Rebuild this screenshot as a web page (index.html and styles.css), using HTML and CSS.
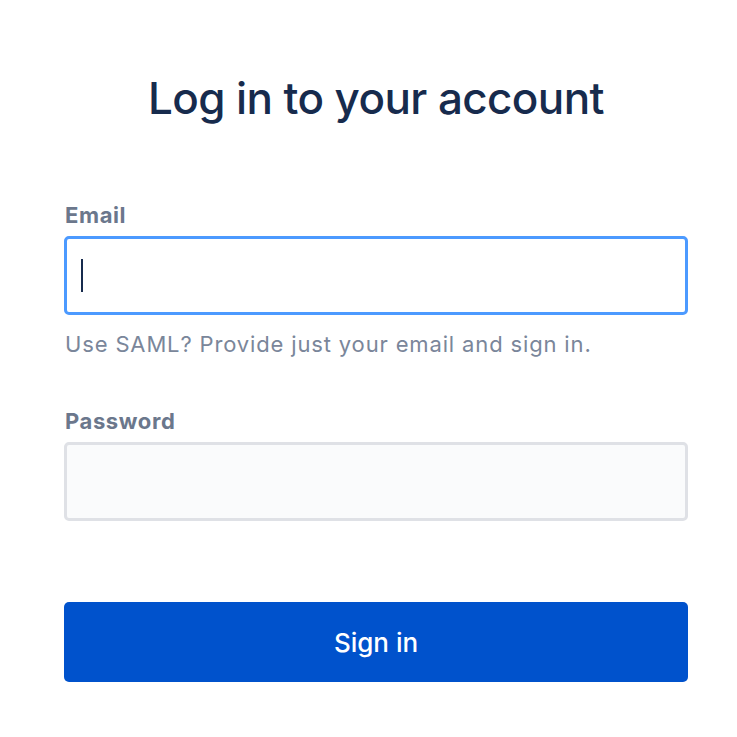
FILE: index.html
```html
<!DOCTYPE html>
<html>
<head>
<meta charset="utf-8">
<link rel="stylesheet" href="styles.css">
</head>
<body>
<main class="page">
  <h1 class="title">Log in to your account</h1>
  <form class="form">
    <div class="field">
      <label class="label">Email</label>
      <div class="input input-focus"><span class="caret"></span></div>
      <p class="help">Use SAML? Provide just your email and sign in.</p>
    </div>
    <div class="field">
      <label class="label">Password</label>
      <div class="input input-idle"></div>
    </div>
    <div class="button">Sign in</div>
  </form>
</main>
</body>
</html>
```
FILE: styles.css
```css
html, body {
  margin: 0;
  padding: 0;
  background: #ffffff;
}
body {
  font-family: Inter, "Noto Sans", "Liberation Sans", sans-serif;
}
.page {
  width: 624px;
  margin-left: 64px;
  padding-top: 70px;
}
.title {
  margin: 0;
  text-align: center;
  font-size: 44px;
  line-height: 56px;
  font-weight: 500;
  color: #172B4D;
  letter-spacing: -0.6px;
}
.form {
  margin-top: 76px;
  display: flex;
  flex-direction: column;
}
.field {
  display: flex;
  flex-direction: column;
}
.label {
  font-size: 22px;
  line-height: 26px;
  font-weight: 700;
  color: #6B778C;
  margin-bottom: 8px;
  padding-left: 1px;
  letter-spacing: 0.6px;
}
.input {
  box-sizing: border-box;
  height: 79px;
  border-radius: 5px;
  border: 3px solid #DFE1E6;
  background: #FAFBFC;
  display: flex;
  align-items: center;
  padding-left: 14px;
}
.input-focus {
  border-color: #4C9AFF;
  background: #ffffff;
}
.caret {
  width: 2px;
  height: 33px;
  background: #172B4D;
}
.help {
  margin: 16px 0 0 1px;
  font-size: 22px;
  line-height: 26px;
  color: #7A869A;
  letter-spacing: 0.85px;
}
.field + .field {
  margin-top: 51px;
}
.button {
  margin-top: 81px;
  height: 80px;
  border-radius: 5px;
  background: #0052CC;
  color: #ffffff;
  font-size: 26px;
  font-weight: 500;
  display: flex;
  align-items: center;
  justify-content: center;
}
```
